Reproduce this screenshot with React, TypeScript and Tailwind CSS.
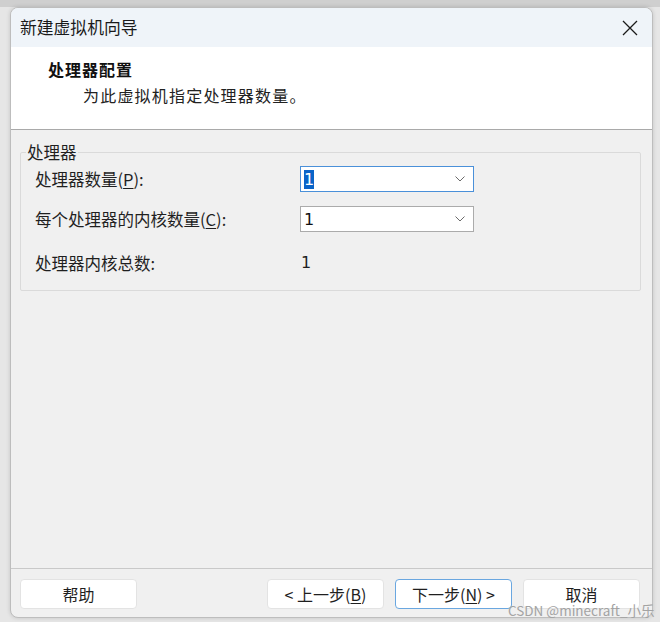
import React from "react";

const font = { fontFamily: '"Noto Sans CJK SC", "Noto Sans", sans-serif' };

function Combo({ focused }: { focused?: boolean }) {
  return (
    <div
      className={
        "flex h-[26px] w-[174px] items-center justify-between bg-white pl-[3px] pr-[8px] border " +
        (focused ? "border-[#4a90d9]" : "border-[#ababab]")
      }
    >
      {focused ? (
        <span
          className="bg-[#0a64c8] text-[16px] leading-[19px] text-white"
          style={{ fontFamily: '"DejaVu Sans", sans-serif' }}
        >
          1
        </span>
      ) : (
        <span
          className="text-[16px] leading-[19px] text-[#111]"
          style={{ fontFamily: '"DejaVu Sans", sans-serif' }}
        >
          1
        </span>
      )}
      <svg width="10" height="6" viewBox="0 0 10 6" fill="none">
        <path d="M0.5 0.5 L5 5 L9.5 0.5" stroke="#6b6b6b" strokeWidth="1" />
      </svg>
    </div>
  );
}

function Btn({ children, primary }: { children: React.ReactNode; primary?: boolean }) {
  return (
    <div
      className={
        "flex h-[30px] w-[117px] items-center justify-center rounded-[4px] bg-white text-[16px] text-[#1f1f1f] border " +
        (primary ? "border-[#6aa7e0]" : "border-[#e3e3e3]")
      }
    >
      {children}
    </div>
  );
}

export default function App() {
  return (
    <div
      className="relative h-[622px] w-[660px] overflow-hidden bg-[linear-gradient(to_bottom,#cfcfcf_7px,#e6e6e6_7px)] pl-[10px] pt-[7px]"
      style={font}
    >
      <div className="flex h-[611px] w-[643px] flex-col overflow-hidden rounded-[8px] border border-[#bdbdbd] bg-[#f0f0f0] shadow-[0_0_4px_rgba(0,0,0,0.15)]">
        {/* title bar */}
        <div className="flex h-[39px] items-center justify-between bg-[#eff4f9] pl-[9px] pr-[14px]">
          <span className="text-[16.8px] text-[#1a1a1a]">新建虚拟机向导</span>
          <svg width="16" height="16" viewBox="0 0 16 16" fill="none">
            <path d="M1 1 L15 15 M15 1 L1 15" stroke="#1a1a1a" strokeWidth="1.3" />
          </svg>
        </div>
        {/* header */}
        <div className="flex h-[83px] flex-col border-b border-[#a9a9a9] bg-white pl-[37px] pt-[11px]">
          <span className="text-[16px] font-bold leading-[22px] tracking-[1px] text-[#111]">处理器配置</span>
          <span className="ml-[35px] mt-[4px] text-[16px] leading-[22px] tracking-[1.2px] text-[#222]">
            为此虚拟机指定处理器数量。
          </span>
        </div>
        {/* body */}
        <div className="flex-1 pl-[9px] pr-[11px] pt-[12px]">
          <fieldset className="rounded-[2px] border border-[#dadada] pb-[14px]">
            <legend className="ml-[5px] px-[1px] text-[16.5px] leading-[20px] text-[#1f1f1f]">处理器</legend>
            <div className="mt-[4px] grid grid-cols-[265px_174px] items-center pl-[14px] text-[16.5px] text-[#1f1f1f]">
              <span className="leading-[26px]">
                处理器数量(<span className="underline underline-offset-2">P</span>):
              </span>
              <Combo focused />
            </div>
            <div className="mt-[14px] grid grid-cols-[265px_174px] items-center pl-[14px] text-[16.5px] text-[#1f1f1f]">
              <span className="leading-[26px]">
                每个处理器的内核数量(<span className="underline underline-offset-2">C</span>):
              </span>
              <Combo />
            </div>
            <div className="mt-[18px] grid h-[26px] grid-cols-[265px_174px] items-center pl-[14px] text-[16.5px] text-[#1f1f1f]">
              <span className="leading-[26px]">处理器内核总数:</span>
              <span className="pl-[1px] text-[16px] leading-[26px]" style={{ fontFamily: '"DejaVu Sans", sans-serif' }}>
                1
              </span>
            </div>
          </fieldset>
        </div>
        {/* footer */}
        <div className="flex h-[49px] items-start border-t border-[#c9c9c9] pl-[9px] pr-[12px] pt-[10px]">
          <Btn>帮助</Btn>
          <div className="ml-auto flex gap-[11px]">
            <Btn>
              &lt; 上一步(<span className="underline underline-offset-2">B</span>)
            </Btn>
            <Btn primary>
              下一步(<span className="underline underline-offset-2">N</span>) &gt;
            </Btn>
            <Btn>取消</Btn>
          </div>
        </div>
      </div>
      <span className="absolute left-[508px] top-[600px] text-[13.5px] leading-[20px] text-[#a3a3a3]">
        CSDN @minecraft_小乐
      </span>
    </div>
  );
}
